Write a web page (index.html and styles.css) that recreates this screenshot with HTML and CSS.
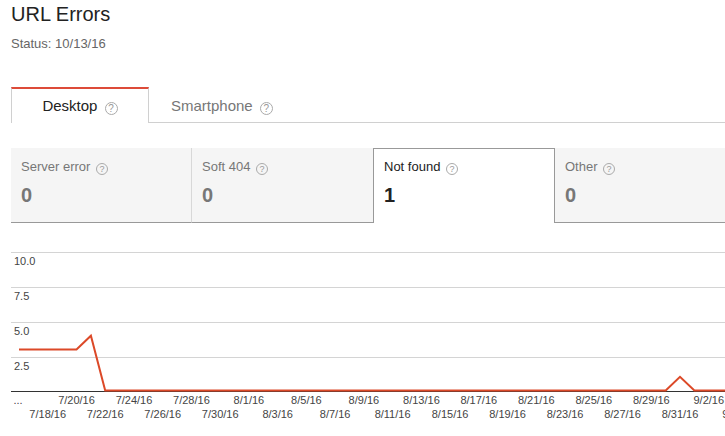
FILE: index.html
```html
<!DOCTYPE html>
<html>
<head>
<meta charset="utf-8">
<link rel="stylesheet" href="styles.css">
</head>
<body>
<div class="page">
  <h1 class="title">URL Errors</h1>
  <div class="status">Status: 10/13/16</div>

  <div class="tabs">
    <div class="tab tab-active">Desktop <span class="help help-lg">?</span></div>
    <div class="tab tab-idle">Smartphone <span class="help help-lg">?</span></div>
  </div>

  <div class="cards">
    <div class="card card-sep">
      <div class="label">Server error <span class="help">?</span></div>
      <div class="value">0</div>
    </div>
    <div class="card">
      <div class="label">Soft 404 <span class="help">?</span></div>
      <div class="value">0</div>
    </div>
    <div class="card card-active">
      <div class="label">Not found <span class="help">?</span></div>
      <div class="value">1</div>
    </div>
    <div class="card card-last">
      <div class="label">Other <span class="help">?</span></div>
      <div class="value">0</div>
    </div>
  </div>

  <svg class="chart" width="725" height="196" viewBox="0 240 725 196">
    <g class="grid">
      <rect x="11" y="252" width="714" height="1"/>
      <rect x="11" y="287" width="714" height="1"/>
      <rect x="11" y="322" width="714" height="1"/>
      <rect x="11" y="357" width="714" height="1"/>
    </g>
    <rect class="axis" x="11" y="391" width="714" height="1"/>
    <g class="ylab">
      <text x="14" y="265">10.0</text>
      <text x="14" y="300">7.5</text>
      <text x="14" y="335">5.0</text>
      <text x="14" y="370">2.5</text>
    </g>
    <path class="series" d="M19 349.4 L76.5 349.4 L90.9 335.7 L105.2 390.5 L665.7 390.5 L680 376.8 L694.4 390.5 L725 390.5"/>
    <g class="xlab">
      <text x="18" y="404">...</text>
      <text x="76.5" y="404">7/20/16</text>
      <text x="134" y="404">7/24/16</text>
      <text x="191.4" y="404">7/28/16</text>
      <text x="248.9" y="404">8/1/16</text>
      <text x="306.4" y="404">8/5/16</text>
      <text x="363.9" y="404">8/9/16</text>
      <text x="421.4" y="404">8/13/16</text>
      <text x="478.8" y="404">8/17/16</text>
      <text x="536.3" y="404">8/21/16</text>
      <text x="593.8" y="404">8/25/16</text>
      <text x="651.3" y="404">8/29/16</text>
      <text x="708.8" y="404">9/2/16</text>
      <text x="47.7" y="418">7/18/16</text>
      <text x="105.2" y="418">7/22/16</text>
      <text x="162.7" y="418">7/26/16</text>
      <text x="220.2" y="418">7/30/16</text>
      <text x="277.7" y="418">8/3/16</text>
      <text x="335.1" y="418">8/7/16</text>
      <text x="392.6" y="418">8/11/16</text>
      <text x="450.1" y="418">8/15/16</text>
      <text x="507.6" y="418">8/19/16</text>
      <text x="565.1" y="418">8/23/16</text>
      <text x="622.5" y="418">8/27/16</text>
      <text x="680" y="418">8/31/16</text>
      <text x="737.5" y="418">9/4/16</text>
    </g>
  </svg>
</div>
</body>
</html>
```

FILE: styles.css
```css
html, body {
  margin: 0;
  padding: 0;
  overflow: hidden;
  background: #fff;
}

.page {
  width: 725px;
  font-family: "Liberation Sans", Arial, sans-serif;
  color: #222;
}

.title {
  margin: 2px 0 0 11px;
  font-size: 20px;
  line-height: 24px;
  font-weight: normal;
  color: #222;
}

.status {
  margin: 10px 0 0 11px;
  font-size: 13px;
  line-height: 16px;
  color: #666;
}

.tabs {
  display: flex;
  margin: 35px 0 0 11px;
  border-bottom: 1px solid #d0d0d0;
}

.tab {
  box-sizing: border-box;
  height: 36px;
  line-height: 34px;
  font-size: 15px;
  border-top: 2px solid transparent;
  margin-bottom: -1px;
  white-space: nowrap;
}

.tab-active {
  width: 138px;
  text-align: center;
  background: #fff;
  border-top-color: #dd4b39;
  border-left: 1px solid #d0d0d0;
  border-right: 1px solid #d0d0d0;
  color: #222;
}

.tab-idle {
  padding-left: 22px;
  color: #777;
}

.help {
  display: inline-block;
  box-sizing: border-box;
  width: 12px;
  height: 12px;
  border: 1px solid #aaa;
  border-radius: 50%;
  font-size: 9px;
  line-height: 10px;
  text-align: center;
  color: #999;
  vertical-align: -1px;
  margin-left: 2px;
}

.help-lg {
  width: 13px;
  height: 13px;
  line-height: 11px;
  font-size: 10px;
  margin-left: 3px;
  vertical-align: -1px;
}

.cards {
  display: flex;
  margin: 25px 0 0 11px;
  width: 900px;
}

.card {
  box-sizing: border-box;
  width: 181px;
  height: 75px;
  flex: none;
  padding: 11px 0 0 10px;
  background: #f5f5f5;
  border-bottom: 1px solid #999;
  color: #777;
  white-space: nowrap;
}

.card-sep {
  border-right: 1px solid #d8d8d8;
}

.card-active {
  width: 182px;
  padding-top: 10px;
  padding-left: 10px;
  background: #fff;
  border: 1px solid #999;
  border-bottom: none;
  color: #222;
}

.card-last {
  width: 300px;
}

.label {
  font-size: 13px;
  line-height: 16px;
}

.value {
  margin-top: 8px;
  font-size: 20px;
  line-height: 24px;
  font-weight: bold;
}

.chart {
  display: block;
  margin-top: 17px;
}

.grid rect {
  fill: #d4d4d4;
}

.axis {
  fill: #333;
}

.series {
  fill: none;
  stroke: #dc4928;
  stroke-width: 2;
  stroke-linejoin: miter;
}

.ylab text {
  font-family: "Liberation Sans", Arial, sans-serif;
  font-size: 11px;
  fill: #444;
}

.xlab text {
  font-family: "Liberation Sans", Arial, sans-serif;
  font-size: 11px;
  fill: #444;
  text-anchor: middle;
}
```
